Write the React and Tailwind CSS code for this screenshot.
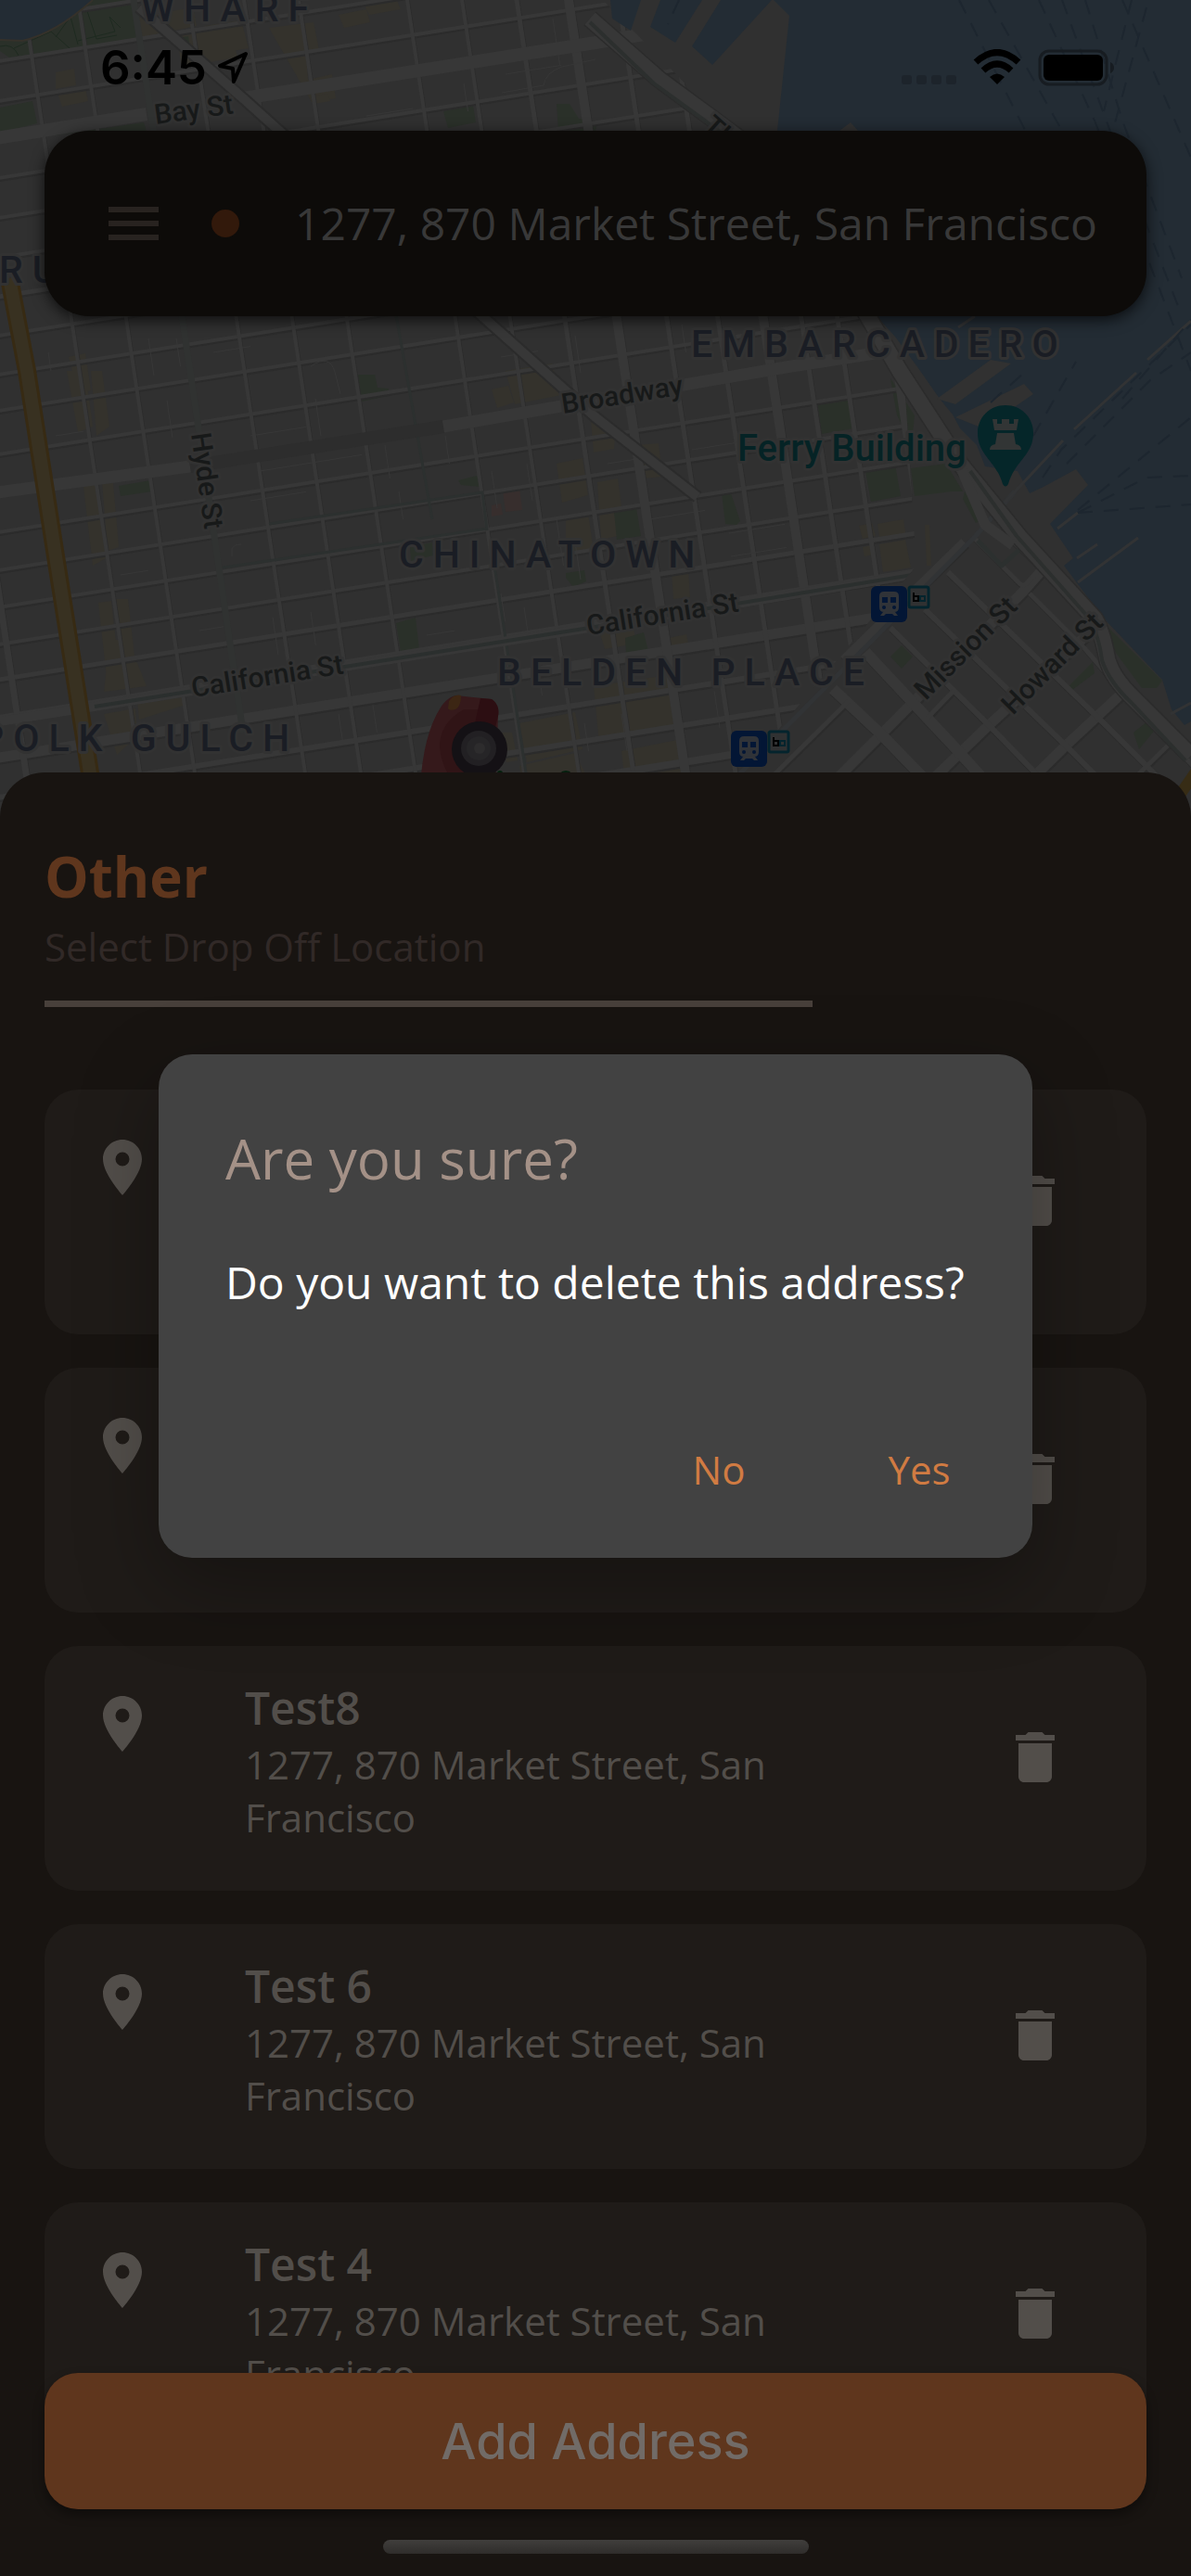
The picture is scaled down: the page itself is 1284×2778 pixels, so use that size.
import { MdDelete, MdLocationOn, MdMenu } from "react-icons/md";

const ADDRESS = "1277, 870 Market Street, San Francisco";

const places = [
  { id: 1, name: "Test 10" },
  { id: 2, name: "Test 9" },
  { id: 3, name: "Test8" },
  { id: 4, name: "Test 6" },
  { id: 5, name: "Test 4" },
];

/* y at x = 0 of the east-west streets, and their width */
const rows = [
  [66, 4], [109, 4], [192, 4], [235, 4], [278, 4], [320, 5], [362, 4], [404, 4], [443, 4],
  [490, 4], [574, 4], [615, 4], [655, 4], [695, 4], [733, 5], [817, 11], [860, 6], [900, 6],
  [940, 8], [980, 8], [24, 4], [776, 10],
];

/* x at y = 400 of the north-south streets, and their width */
const cols = [
  [-37, 7], [86, 4], [145, 4], [264, 4], [324, 4], [383, 4], [500, 4], [559, 4],
  [618, 5], [674, 10], [728, 5], [783, 5], [832, 10], [873, 5], [912, 5], [968, 9],
];

/* short back alleys as [x, y, length, direction] */
const alleys = [
  [152, 40, 60, "h"], [330, 210, 40, "v"], [130, 620, 30, "h"], [60, 470, 30, "h"],
  [270, 470, 60, "h"], [340, 430, 40, "v"], [180, 432, 40, "v"], [480, 470, 30, "v"],
  [415, 480, 36, "v"], [430, 530, 30, "v"], [280, 508, 110, "h"], [270, 540, 60, "h"],
  [294, 666, 40, "v"], [335, 660, 36, "v"], [460, 685, 30, "h"], [215, 680, 26, "h"],
  [540, 640, 30, "v"], [565, 655, 34, "v"], [600, 560, 50, "v"], [620, 585, 40, "v"],
  [530, 508, 40, "v"], [568, 500, 40, "v"], [746, 485, 70, "h"], [700, 560, 60, "h"],
  [786, 575, 60, "h"], [788, 600, 60, "h"], [365, 770, 30, "v"], [402, 760, 30, "v"],
  [52, 380, 20, "v"], [160, 365, 40, "v"], [190, 365, 30, "v"], [230, 380, 40, "h"],
  [540, 385, 40, "h"], [620, 362, 40, "v"], [735, 350, 30, "v"], [395, 125, 50, "h"],
  [500, 90, 30, "v"], [545, 80, 60, "h"], [596, 20, 50, "v"], [655, 500, 40, "h"],
  [580, 720, 30, "v"], [770, 745, 40, "v"], [670, 770, 40, "v"], [630, 780, 30, "v"],
];

const shops = [
  "M118 24l90-16 4 20-88 18zM190 36l58-8 8 34-60 10zM60 78l20-4 2 18-22 4zM62 100l30-5 3 14-28 6zM220 28l40-6 8 30-22 4zM290 30l48-6 6 30-14 4 2 28 26-6 4 26-26 4z",
  "M74 385l18-4 6 40-14 4zM72 400l20 0 8 60-16 6zM98 400l12 0 8 60-14 10zM90 525l14-3 10 80-14 8zM110 520l12 0 6 70-12 4zM106 650l14-2 10 88-14 4zM124 646l14 0 8 70-16 4zM112 770l34-6 2 30-22 20zM148 756l52-8 0 12-50 16zM118 690l20 0 20 50-46 6z",
  "M545 400l50-8 10 34-50 10zM530 420l18-4 6 18-18 6zM600 500l28-6 6 40-28 8zM610 560l24-6 6 40-30 6zM644 520l22-4 8 60-26 6zM636 440l28 20-2 24-22 4zM724 616l18-2 2 30-18 2zM926 567l14-3 4 14-14 3zM946 565l28-5 3 20-28 5zM948 587l28-5 6 30-30 5zM930 590l10-2 2 10-10 2zM997 566l5 0 2 44-5 0z",
  "M660 425l66-14 4 14-66 12zM688 480l22-2 4 36-20 2zM560 780l60-12 8 40-60 14zM640 740l80-12 10 60-84 14zM560 826l60-14 12 24-68 10zM670 810l60-12 10 40-66 8zM540 790l12 0 6 30-12 2zM646 680l36-8 4 22-34 6zM722 688l18-4 2 10-18 4z",
  "M365 16l30-6 4 14-28 6zM392 4l34-8 6 14-34 6zM335 104l18-3 3 8-18 3z",
];

const parks = [
  "M0 116l35-7 5 24-40 10z", "M60 146l95-14 3 10h-98z", "M478 120l32-6 3 18-30 6z",
  "M600 112l14 0 10 16 20 4-2 9h-40z", "M386 404l18 0 3 14 12 1-1 8-28 6z",
  "M128 524l34-6 2 12-34 5z", "M494 518l20-5 3 12-20-2z", "M427 672l21-6 4 34-20 3z",
  "M442 590l24-5 1 14-24 6z", "M610 618l20-3 2 12-14 6-8-10z", "M881 432l32-6 7 36-34 6z",
  "M933 508l32-7 6 34-32 6z", "M960 408l26 40-3 30-16-30z", "M982 505l38-5 18 30-12 0-40 5z",
  "M1040 530l20 30-8 4-14-26z", "M662 552l24-4 5 30-26 4z", "M778 532l10 0 10 30-4 4-12-1z",
  "M674 688l20-6 5 20-24 4z", "M972 696l12 12-12 13-12-13z", "M1190 672l63 62-6 8-16 0-28-38z",
  "M1152 740l26-26 2 12-24 18z", "M1222 790l20-16 4 12-18 22z",
];

function StreetGrid({ data, horizontal }) {
  return data.map(([at, width]) =>
    horizontal ? (
      <path key={at} d={`M-20 ${at + 3}L1320 ${at - 211}`} strokeWidth={width} />
    ) : (
      <path key={at} d={`M${at - 64} -20L${at + 72} 880`} strokeWidth={width} />
    )
  );
}

function SouthStreets() {
  return (
    <>
      <path d="M1125 613L1103 638L950 792L880 862M1180 677L1065 783L980 865M1207 750L1148 805L1090 862M1040 585L910 712" strokeWidth="11" />
      <path d="M898 743L950 792L1020 864M933 703L1033 810L1080 862" strokeWidth="12" />
      <path d="M1022 617L1183 773L1270 860M997 657L1148 803L1200 855M960 677L1067 783L1140 858" strokeWidth="6" />
      <path d="M1050 580L1098 628Q1103 634 1108 628L1122 613L1092 584M1110 640L1170 700L1207 743L1290 830M1260 803L1210 852M915 756L830 840M1028 745L1000 774" strokeWidth="5" />
    </>
  );
}

const EMBARCADERO = "M636 20L710 85L798 150L900 280L970 400L1035 500L1100 580L1180 667Q1188 680 1194 712Q1200 732 1222 753L1284 815";

function Station({ x, y }) {
  return (
    <g transform={`translate(${x} ${y})`}>
      <rect width="39" height="39" rx="6" fill="#031635" />
      <path d="M14 6h11q5 0 5 5v12q0 5-5 5h-11q-5 0-5-5v-12q0-5 5-5zM13 28h13l3 4h-4l-2-2h-7l-2 2h-4z" fill="#303338" />
      <path d="M12 12h6v6h-6zM21 12h6v6h-6z" fill="#031635" />
      <circle cx="14" cy="23" r="2" fill="#031635" />
      <circle cx="25" cy="23" r="2" fill="#031635" />
      <rect x="41" y="1" width="21" height="22" rx="2" fill="#303132" stroke="#04242d" strokeWidth="3" />
      <path d="M46 7v9h5v-5h-5" fill="none" stroke="#000" strokeWidth="2" />
      <path d="M54 16h-1v-5h5v5z" fill="none" stroke="#04242d" strokeWidth="2" />
    </g>
  );
}

function CityMap() {
  return (
    <svg
      className="absolute inset-x-0 top-0 h-[900px] w-full"
      viewBox="0 0 1284 900"
      preserveAspectRatio="xMidYMin slice"
      aria-label="Map of San Francisco"
      role="img"
    >
      <defs>
        <clipPath id="north">
          <path d="M0 0H650L798 150L900 280L975 410L988 610L798 836L730 900H0z" />
        </clipPath>
      </defs>
      <rect width="1284" height="900" fill="#303030" />
      <g fill="#34322c">
        {shops.map((d) => <path key={d} d={d} />)}
      </g>
      <path d="M530 545l10-2 2 12-12 2zM542 530l18-4 3 24-18 2z" fill="#372e2d" />
      <g fill="#2a3029">
        {parks.map((d) => <path key={d} d={d} />)}
        <path d="M100 0H140L150 40L80 52L10 62L0 55V43L30 43Q60 36 100 0z" />
        <path d="M185 42l18-3 2 14z" />
      </g>
      <path d="M0 50q14-4 20 10M15 52l40-18 20 18M60 40l16-22 8 30M94 12l10 30 22-4M84 44l40-10-6-16 12 12" fill="none" stroke="#1e2a20" strokeWidth="1" />

      <g clipPath="url(#north)" fill="none" stroke="#373737">
        <g stroke="#2b2b2b" transform="translate(1 2)">
          <StreetGrid data={rows} horizontal />
          <StreetGrid data={cols} />
        </g>
        <StreetGrid data={rows} horizontal />
        <StreetGrid data={cols} />
        <g strokeWidth="1">
          {alleys.map(([x, y, len, dir]) => (
            <path key={`${x}-${y}`} d={dir === "h" ? `M${x} ${y}l${len} ${-len * 0.16}` : `M${x} ${y}l${len * 0.15} ${len}`} />
          ))}
          <path d="M541 100l45-8q2-14 20-20l36-8M250 600v-8q2-5 10-5M335 395q20-14 26 6l6 24" />
        </g>
        <path d="M141 -20L205 400L262 790" stroke="#303231" strokeWidth="7" />
        <path d="M420 300L466 560M530 590L568 840M240 612L525 570M290 565L520 531L525 572" stroke="#2c302f" strokeWidth="3" />
        <path d="M-10 150L158 123M262 106L642 46L700 36" strokeWidth="14" />
        <path d="M-10 532L205 503" strokeWidth="13" />
        <path d="M205 503L478 460" stroke="#2d2d2d" strokeWidth="14" />
        <path d="M478 460L847 396L950 380" strokeWidth="13" />
        <path d="M150 8L262 106L311 150L520 341L642 450L752 536" stroke="#2b2b2b" strokeWidth="14" />
        <path d="M150 8L262 106L311 150L520 341L642 450L752 536" strokeWidth="10" />
        <path d="M0 778L102 762L642 676L1002 617" strokeWidth="10" />
        <path d="M102 762L642 676L1002 617" stroke="#2b2f2e" strokeWidth="4" />
      </g>

      <g fill="none" strokeLinejoin="round">
        <g stroke="#2b2b2b" transform="translate(1 2)">
          <SouthStreets />
        </g>
        <g stroke="#373737">
          <SouthStreets />
        </g>
        <path d="M1054 583L1080 610L1104 588" stroke="#2c302f" strokeWidth="5" />
        <path d="M792 840L1050 580L1094 530" stroke="#313335" strokeWidth="5" />
      </g>

      <g fill="#232c34">
        <path d="M0 0H100Q60 36 24 44L0 43z" />
        <path d="M658 0H691L680 33L660 20zM712 0H757L728 46L701 29zM777 0H832L768 70L746 50z" />
        <path d="M834 0L851 17L838 141L900 180L930 300L945 341L965 363L990 397L1013 430L1027 447L1035 462L1053 480L1062 503L1097 508L1110 532L1125 525L1160 506L1173 523L1132 565L1157 602L1147 610L1190 667L1253 733L1263 765L1277 782L1284 778V0z" />
      </g>
      <path d="M100 0Q60 36 24 44L0 43" fill="none" stroke="#35312a" strokeWidth="2" />
      <path d="M1010 430L1068 388L1090 392L1030 436zM1030 450L1104 414L1114 425L1060 462zM905 141l12-9 8 9z" fill="#313131" />
      <path d="M1158 463L1225 402M1083 542L1146 475M1033 353l18-12M1237 388l47-42M1140 570l22-17M1161 602l22-15M1162 628L1227 580M1262 770l22-12" fill="none" stroke="#323334" strokeWidth="3" />
      <g fill="none" stroke="#1d262f" strokeWidth="2" strokeDasharray="16 12">
        <path d="M1034 0L1110 150M1066 0L1150 150M1120 0L1180 130L1284 400M1145 0L1200 150L1270 330M1170 0L1210 130L1274 300M1210 0L1284 170M1236 8L1200 140M1114 470L1160 390M1124 515L1144 485L1284 350M1150 500L1240 410L1284 380M1162 553L1236 515L1284 513M1162 553L1284 544M1162 550L1284 450M1068 434L1104 402M1210 430L1284 345M1220 0L1190 120M732 0L720 26" />
      </g>

      <g fill="none" strokeLinejoin="round">
        <path d={EMBARCADERO} stroke="#2b2b2b" strokeWidth="20" />
        <path d={EMBARCADERO} stroke="#373737" strokeWidth="17" />
        <path d="M636 24L705 90L794 155M1046 508L1096 578L1170 662Q1184 680 1188 712Q1196 736 1220 758L1278 820" stroke="#2c2f2e" strokeWidth="4" />
        <path d="M1036 505L1062 566L1092 588" stroke="#373737" strokeWidth="11" />
      </g>

      <path d="M10 300L29 400L60 600L98 840" fill="none" stroke="#372a13" strokeWidth="20" />
      <path d="M10 300L29 400L60 600L98 840" fill="none" stroke="#383121" strokeWidth="14" />
      <path d="M1270 860L1292 828" fill="none" stroke="#372c15" strokeWidth="12" />

      <g fontFamily="Roboto, sans-serif" fontWeight="500" stroke="#323232" strokeWidth="6" strokeLinejoin="round" paintOrder="stroke">
        <g fill="#1a1d24" fontSize="41" letterSpacing="10">
          <text x="152" y="23">WHARF</text>
          <text x="-1" y="305">RU</text>
          <text x="745" y="385">EMBARCADERO</text>
          <text x="430" y="612">CHINATOWN</text>
          <text x="536" y="739">BELDEN PLACE</text>
          <text x="-22" y="810">POLK GULCH</text>
        </g>
        <g fill="#171919" fontSize="30">
          <text transform="translate(168 134) rotate(-8)">Bay St</text>
          <text transform="translate(607 446) rotate(-9)">Broadway</text>
          <text transform="translate(208 752) rotate(-9)">California St</text>
          <text transform="translate(634 685) rotate(-9)">California St</text>
          <text transform="translate(206 468) rotate(82)">Hyde St</text>
          <text transform="translate(998 756) rotate(-45)">Mission St</text>
          <text transform="translate(1092 772) rotate(-45)">Howard St</text>
          <text transform="translate(756 138) rotate(42)">The</text>
        </g>
        <text x="795" y="497" fill="#052325" fontSize="40">Ferry Building</text>
      </g>

      <path d="M1084 437c17 0 30 13 30 30 0 24-20 30-27 55q-3 5-6 0c-7-25-27-31-27-55 0-17 13-30 30-30z" fill="#052629" />
      <path d="M1070 452h5v5h5v-5h8v5h5v-5h5l-2 12h-24zM1075 467h18l2 12q6 1 6 6h-34q0-5 6-6z" fill="#323535" />
      <Station x={939} y={632} />
      <Station x={788} y={788} />
      <circle cx="610" cy="840" r="9" fill="#04200e" />
      <circle cx="539" cy="834" r="3" fill="#04200e" />

      <path d="M453 850Q456 790 477 760Q484 751 492 750L530 754Q539 760 537 772L534 850z" fill="#35191b" />
      <path d="M500 765Q474 780 474 805Q476 830 494 850H520V765z" fill="#301416" />
      <path d="M518 753L530 754Q539 760 537 772L534 784L512 780z" fill="#2c0e12" />
      <path d="M484 756q6-8 13-6 0 12-6 15-7 2-8-1z" fill="#3c2614" />
      <ellipse cx="517" cy="808" rx="30" ry="30" fill="#141115" />
      <circle cx="516" cy="807" r="19" fill="#222023" />
      <circle cx="516" cy="807" r="13" fill="#262527" />
      <circle cx="517" cy="807" r="6" fill="#2d2c2d" />
    </svg>
  );
}

function StatusBar() {
  return (
    <div className="flex h-[141px] items-start justify-between pt-[42px] pr-20 pl-[108px] font-['Inter',sans-serif]">
      <div className="flex items-center gap-3 text-black">
        <time className="text-[51px] leading-[62px] font-semibold">6:45</time>
        <svg width="34" height="36" viewBox="0 0 34 36" fill="none" stroke="currentColor" strokeWidth="4" strokeLinejoin="round" aria-hidden="true">
          <path d="M30 3L2 16L16 19L17 33z" />
        </svg>
      </div>
      <div className="flex h-[62px] items-center">
        <svg width="232" height="40" viewBox="0 0 232 40" aria-label="Wi-Fi connected, battery full" role="img">
          <g fill="#1d242b">
            <rect x="0" y="28" width="11" height="10" rx="3" />
            <rect x="16" y="28" width="11" height="10" rx="3" />
            <rect x="32" y="28" width="11" height="10" rx="3" />
            <rect x="48" y="28" width="11" height="10" rx="3" />
          </g>
          <g fill="none" stroke="#000" strokeWidth="7">
            <path d="M80 14Q103 -7 126 14" />
            <path d="M88 23Q103 9 118 23" />
          </g>
          <path d="M95 30Q103 23 111 30L103 38z" />
          <rect x="149" y="2" width="72" height="36" rx="10" fill="none" stroke="#171c21" strokeWidth="3" />
          <rect x="153" y="6" width="64" height="28" rx="6" />
          <path d="M225 14q4 2 4 6t-4 6z" fill="#171c21" />
        </svg>
      </div>
    </div>
  );
}

function PlaceCard({ name }) {
  return (
    <li className="flex h-[264px] shrink-0 items-start rounded-[36px] bg-[#1f1b18] pr-[84px] pl-12 text-[#524e4a]">
      <MdLocationOn className="mt-12 size-[72px] shrink-0" aria-hidden="true" />
      <div className="mt-[34px] ml-24 w-[600px]">
        <h2 className="text-[48px] leading-[65px] font-semibold">{name}</h2>
        <p className="text-[42px] leading-[57px]">{ADDRESS}</p>
      </div>
      <button type="button" aria-label={`Delete ${name}`} className="mt-[84px] ml-auto">
        <MdDelete className="size-[72px]" />
      </button>
    </li>
  );
}

export default function App() {
  return (
    <div className="relative flex h-screen flex-col overflow-hidden bg-[#303030] font-['Open_Sans',sans-serif]">
      <CityMap />

      <div className="relative">
        <StatusBar />
        <header className="mx-12 flex h-[200px] items-center rounded-[48px] bg-[#0d0b09] pl-[60px] shadow-[0_4px_16px_rgba(0,0,0,0.7)]">
          <button type="button" aria-label="Open menu" className="text-[#282320]">
            <MdMenu className="size-[72px]" />
          </button>
          <span className="ml-12 size-[30px] shrink-0 rounded-full bg-[#32190b]" />
          <p className="ml-[60px] text-[48px] leading-[66px] whitespace-nowrap text-[#383838]">{ADDRESS}</p>
        </header>
      </div>

      <main className="relative mt-[492px] flex min-h-0 flex-1 flex-col rounded-t-[48px] bg-[#181411] px-12 pt-[72px]">
        <h1 className="text-[60px] leading-[80px] font-bold text-[#5f361d]">Other</h1>
        <p className="mt-[7px] text-[42px] leading-[57px] text-[#312927]">Select Drop Off Location</p>
        <hr className="mt-[30px] h-[7px] w-[828px] max-w-full border-0 bg-[#48403b]" />
        <ul className="mt-[89px] flex min-h-0 flex-1 flex-col gap-9 overflow-hidden">
          {places.map((place) => <PlaceCard key={place.id} name={place.name} />)}
        </ul>
        <div className="absolute inset-x-12 bottom-6 flex flex-col items-center">
          <button
            type="button"
            className="h-[147px] w-full rounded-[36px] bg-[#5f361d] font-['Inter',sans-serif] text-[54px] leading-[66px] font-medium text-[#716b67] shadow-[0_6px_12px_rgba(0,0,0,0.4)]"
          >
            Add Address
          </button>
          <div className="mt-[33px] h-[15px] w-[459px] rounded-full bg-linear-to-b from-[#403e3c] to-[#2f2d2b]" />
        </div>
      </main>

      <div className="absolute inset-0 flex items-center justify-center pt-[141px] pb-[102px]">
        <div
          role="alertdialog"
          aria-labelledby="confirm-title"
          aria-describedby="confirm-text"
          className="w-[942px] rounded-[36px] bg-[#424242] shadow-[0_30px_90px_rgba(0,0,0,0.3)]"
        >
          <h2 id="confirm-title" className="px-[72px] pt-[72px] text-[60px] leading-[80px] text-[#a49187]">
            Are you sure?
          </h2>
          <p id="confirm-text" className="px-[72px] pt-[61px] text-[48px] leading-[66px] whitespace-nowrap text-white">
            Do you want to delete this address?
          </p>
          <div className="mt-24 flex justify-end gap-6 px-[26px] pb-6 text-[42px] leading-[57px] text-[#d07b42]">
            <button type="button" className="h-36 w-48">No</button>
            <button type="button" className="h-36 w-48">Yes</button>
          </div>
        </div>
      </div>
    </div>
  );
}
